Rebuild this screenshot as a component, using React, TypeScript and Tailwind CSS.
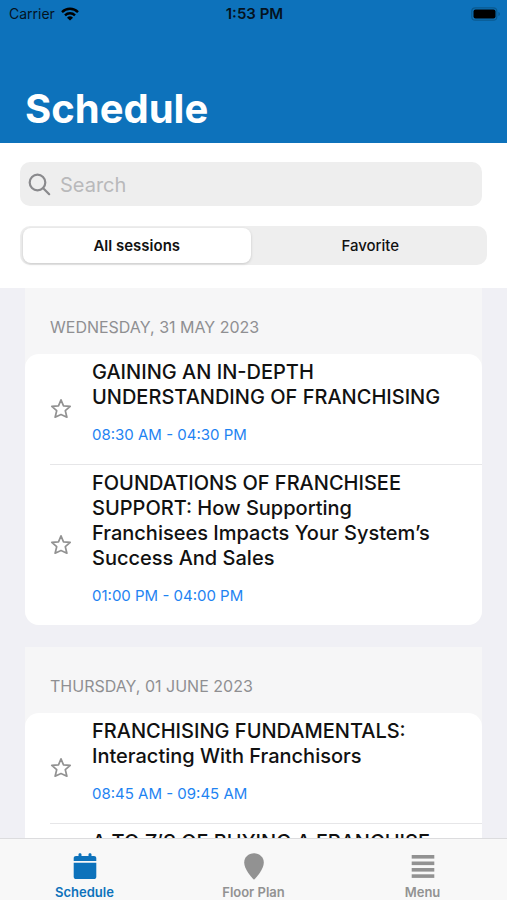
import { useState } from "react";

type Session = { title: string; time?: string };
type Day = { date: string; sessions: Session[] };

const days: Day[] = [
  {
    date: "WEDNESDAY, 31 MAY 2023",
    sessions: [
      { title: "GAINING AN IN-DEPTH UNDERSTANDING OF FRANCHISING", time: "08:30 AM - 04:30 PM" },
      {
        title: "FOUNDATIONS OF FRANCHISEE SUPPORT: How Supporting Franchisees Impacts Your System’s Success And Sales",
        time: "01:00 PM - 04:00 PM",
      },
    ],
  },
  {
    date: "THURSDAY, 01 JUNE 2023",
    sessions: [
      { title: "FRANCHISING FUNDAMENTALS: Interacting With Franchisors", time: "08:45 AM - 09:45 AM" },
      { title: "A TO Z’S OF BUYING A FRANCHISE" },
    ],
  },
];

function WifiIcon() {
  return (
    <svg className="h-[14px] w-[18px]" viewBox="0 0 18 14" fill="none" stroke="black" strokeWidth="2.4" aria-hidden="true">
      <path d="M1 5.1a11.4 11.4 0 0 1 16 0" />
      <path d="M4 8.3a7.2 7.2 0 0 1 10 0" />
      <path d="M9 13.6 6 10.7a4.4 4.4 0 0 1 6 0Z" fill="black" stroke="none" />
    </svg>
  );
}

function BatteryIcon() {
  return (
    <svg className="h-[14px] w-[30px]" viewBox="0 0 30 14" aria-hidden="true">
      <rect x="1.8" y="0.8" width="25" height="12.4" rx="3.5" fill="none" stroke="#0a5a90" strokeWidth="1.2" />
      <rect x="3.500" y="2.5" width="22" height="9" rx="2" fill="black" />
      <path d="M28.400 5v4c1-.3 1.500-1.100 1.500-2s-.5-1.700-1.500-2Z" fill="#0a5a90" />
    </svg>
  );
}

function StarIcon({ filled }: { filled: boolean }) {
  return (
    <svg className="size-[22px]" viewBox="0 0 22 22" fill={filled ? "#929292" : "none"} stroke="#929292" strokeWidth="1.700" strokeLinejoin="round" aria-hidden="true">
      <path d="M11 1.900 13.500 7.900 20.200 8.400 15.300 12.700 16.900 19.200 11 16.500 5.100 19.200 6.700 12.700 1.800 8.400 8.500 7.900Z" />
    </svg>
  );
}

function CalendarIcon() {
  return (
    <svg className="h-[27px] w-6" viewBox="0 0 24 27" fill="currentColor" aria-hidden="true">
      <path d="M.7 8V5.200C.7 3.800 1.700 2.900 3 2.900H5.500V1.400C5.500.7 6.200.3 7 .3S8.500.7 8.500 1.400V2.900H15.500V1.400c0-.7.7-1.100 1.500-1.100s1.500.4 1.500 1.100V2.900H21c1.300 0 2.300.9 2.300 2.300V8Z" />
      <path d="M.7 9.700H23.300V23.700c0 1.400-1 2.300-2.300 2.300H3C1.700 26 .7 25.100.7 23.700Z" />
    </svg>
  );
}

function PinIcon() {
  return (
    <svg className="h-[27px] w-6" viewBox="0 0 24 27" fill="currentColor" aria-hidden="true">
      <path d="M12 .3C6.500.3 2.200 4.300 2.200 9.400 2.200 15.900 9 23.700 12 26.700 15 23.700 21.800 15.900 21.800 9.400 21.800 4.300 17.500.3 12 .3Z" />
    </svg>
  );
}

function MenuIcon() {
  return (
    <svg className="h-[27px] w-6" viewBox="0 0 24 27" fill="currentColor" aria-hidden="true">
      <rect x=".7" y="2" width="22.600" height="3.600" />
      <rect x=".7" y="8.500" width="22.600" height="3.600" />
      <rect x=".7" y="15" width="22.600" height="3.600" />
      <rect x=".7" y="21.300" width="22.600" height="3.600" />
    </svg>
  );
}

function SessionRow({ session, last }: { session: Session; last: boolean }) {
  const [favorite, setFavorite] = useState(false);
  return (
    <li className="pl-[25px]">
      <div className={last ? "flex items-center gap-5" : "flex items-center gap-5 border-b border-[#e6e6e8]"}>
        <button type="button" aria-label="Add to favorites" aria-pressed={favorite} onClick={() => setFavorite(!favorite)}>
          <StarIcon filled={favorite} />
        </button>
        <div className="min-w-0 flex-1 pt-[6px] pr-9 pb-[19px]">
          <h3 className="text-[20px] leading-[25px] font-medium text-[#111]">{session.title}</h3>
          <p className="mt-[15px] min-h-5 text-[15px] leading-5 text-[#1e83f2]">{session.time}</p>
        </div>
      </div>
    </li>
  );
}

const segments = ["All sessions", "Favorite"];
const tabs = [
  { label: "Schedule", Icon: CalendarIcon },
  { label: "Floor Plan", Icon: PinIcon },
  { label: "Menu", Icon: MenuIcon },
];

export default function App() {
  const [segment, setSegment] = useState("All sessions");
  const [query, setQuery] = useState("");

  return (
    <div className="flex h-screen flex-col overflow-hidden bg-[#f0f0f5] font-['Inter','Liberation_Sans',sans-serif]">
      <header className="bg-[#0d72bb] pb-2">
        <div className="grid grid-cols-3 items-center pt-1 pr-[7px] pl-[9px] text-[14px] leading-[19px] text-[#04131f]">
          <div className="flex items-center gap-[6px]">
            <span>Carrier</span>
            <WifiIcon />
          </div>
          <span className="text-center text-[15px] font-semibold">1:53 PM</span>
          <div className="flex justify-end">
            <BatteryIcon />
          </div>
        </div>
        <h1 className="mt-[60px] px-[25px] text-[40px] leading-[52px] font-bold text-white">Schedule</h1>
      </header>

      <div className="bg-white pt-[19px] pr-5 pb-[23px] pl-5">
        <div className="mr-[5px] flex h-11 items-center gap-[9px] rounded-[10px] bg-[#eee] pl-2">
          <svg className="size-[23px] shrink-0" viewBox="0 0 23 23" fill="none" stroke="#8a8a8d" strokeWidth="2.200" strokeLinecap="round" aria-hidden="true">
            <circle cx="9.500" cy="9.500" r="7.800" />
            <path d="m15.200 15.200 6 6" />
          </svg>
          <input
            type="text"
            aria-label="Search"
            placeholder="Search"
            value={query}
            onChange={(e) => setQuery(e.target.value)}
            className="h-full min-w-0 flex-1 bg-transparent pt-px text-[20px] leading-6 outline-none placeholder:text-[#b9b9bb]"
          />
        </div>
        <div className="mt-5 flex h-[39px] gap-[6px] rounded-[10px] bg-[#eee] px-[3px] py-[2px]">
          {segments.map((name) => (
            <button
              key={name}
              type="button"
              aria-pressed={segment === name}
              onClick={() => setSegment(name)}
              className={
                segment === name
                  ? "flex-1 rounded-lg bg-white text-[15px] leading-5 font-semibold text-[#111] shadow-[0_1px_3px_rgba(0,0,0,0.16)]"
                  : "flex-1 rounded-lg text-[15px] leading-5 font-medium text-[#111]"
              }
            >
              {name}
            </button>
          ))}
        </div>
      </div>

      <main className="flex min-h-0 flex-1 flex-col gap-[22px] overflow-hidden px-[25px]">
        {days.map((day) => (
          <section key={day.date} className="shrink-0 rounded-b-[14px] bg-[#f6f6f7]">
            <h2 className="px-[25px] pt-[29px] pb-[17px] text-[16px] leading-5 text-[#8f8f92]">{day.date}</h2>
            <ul className="rounded-[14px] bg-white">
              {day.sessions.map((session, i) => (
                <SessionRow key={session.title} session={session} last={i === day.sessions.length - 1} />
              ))}
            </ul>
          </section>
        ))}
      </main>

      <nav className="grid grid-cols-3 border-t border-[#dcdcde] bg-[#f8f8f8] pt-[14px]">
        {tabs.map(({ label, Icon }, i) => (
          <a
            key={label}
            href="#"
            aria-current={i === 0 ? "page" : undefined}
            className={
              i === 0
                ? "flex flex-col items-center gap-1 text-[13px] leading-4 font-semibold text-[#0d72bb]"
                : "flex flex-col items-center gap-1 text-[13px] leading-4 font-semibold text-[#929292]"
            }
          >
            <Icon />
            {label}
          </a>
        ))}
      </nav>
    </div>
  );
}
